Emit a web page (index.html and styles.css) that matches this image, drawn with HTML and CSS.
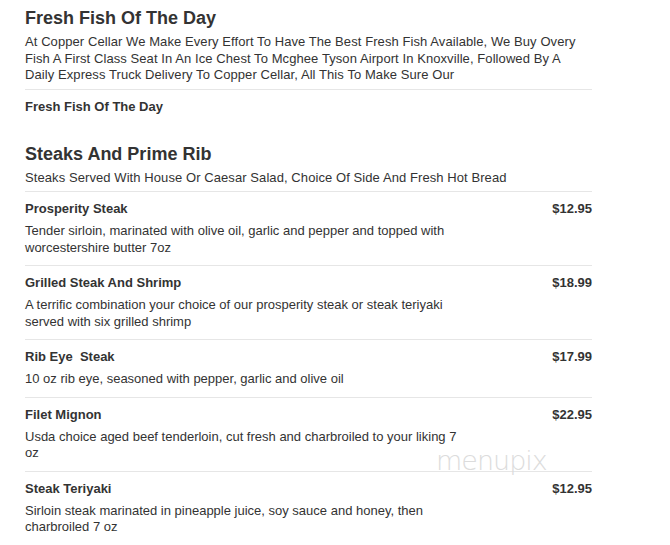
FILE: index.html
```html
<!DOCTYPE html>
<html>
<head>
<meta charset="utf-8">
<link rel="stylesheet" href="styles.css">
</head>
<body>
<div class="menu">
  <section class="section">
    <h2 class="section-title">Fresh Fish Of The Day</h2>
    <p class="section-desc">At Copper Cellar We Make Every Effort To Have The Best Fresh Fish Available, We Buy Overy Fish A First Class Seat In An Ice Chest To Mcghee Tyson Airport In Knoxville, Followed By A Daily Express Truck Delivery To Copper Cellar, All This To Make Sure Our</p>
    <div class="item last">
      <div class="item-main">
        <div class="item-name">Fresh Fish Of The Day</div>
      </div>
    </div>
  </section>
  <section class="section">
    <h2 class="section-title">Steaks And Prime Rib</h2>
    <p class="section-desc">Steaks Served With House Or Caesar Salad, Choice Of Side And Fresh Hot Bread</p>
    <div class="item">
      <div class="item-main">
        <div class="item-name">Prosperity Steak</div>
        <div class="item-desc">Tender sirloin, marinated with olive oil, garlic and pepper and topped with worcestershire butter 7oz</div>
      </div>
      <div class="item-price">$12.95</div>
    </div>
    <div class="item">
      <div class="item-main">
        <div class="item-name">Grilled Steak And Shrimp</div>
        <div class="item-desc">A terrific combination your choice of our prosperity steak or steak teriyaki served with six grilled shrimp</div>
      </div>
      <div class="item-price">$18.99</div>
    </div>
    <div class="item">
      <div class="item-main">
        <div class="item-name">Rib Eye &nbsp;Steak</div>
        <div class="item-desc">10 oz rib eye, seasoned with pepper, garlic and olive oil</div>
      </div>
      <div class="item-price">$17.99</div>
    </div>
    <div class="item">
      <div class="item-main">
        <div class="item-name">Filet Mignon</div>
        <div class="item-desc">Usda choice aged beef tenderloin, cut fresh and charbroiled to your liking 7 oz</div>
      </div>
      <div class="item-price">$22.95</div>
    </div>
    <div class="item last">
      <div class="item-main">
        <div class="item-name">Steak Teriyaki</div>
        <div class="item-desc">Sirloin steak marinated in pineapple juice, soy sauce and honey, then charbroiled 7 oz</div>
      </div>
      <div class="item-price">$12.95</div>
    </div>
  </section>
  <div class="watermark">menupix</div>
</div>
</body>
</html>
```
FILE: styles.css
```css
* { box-sizing: border-box; }
html, body { margin: 0; padding: 0; background: #fff; }
body {
  font-family: "Liberation Sans", Arial, sans-serif;
  color: #333;
}
.menu {
  position: relative;
  width: 592px;
  padding: 7px 0 0 25px;
}
.section { margin-bottom: 13px; }
.section-title {
  margin: 0 0 5px;
  font-size: 18px;
  line-height: 22px;
  font-weight: bold;
  color: #333;
}
.section-desc {
  margin: 0;
  font-size: 13px;
  letter-spacing: 0.08px;
  line-height: 16.5px;
  padding-bottom: 5px;
  border-bottom: 1px solid #e6e6e6;
}
.item {
  display: flex;
  justify-content: space-between;
  align-items: flex-start;
  padding: 8px 0 9px;
  border-bottom: 1px solid #e6e6e6;
}
.item.last { border-bottom: none; }
.item-main { width: 440px; }
.item-name {
  font-size: 13px;
  font-weight: bold;
  line-height: 18px;
  margin-bottom: 5px;
}
.item-desc {
  font-size: 13px;
  line-height: 16.5px;
}
.item-price {
  font-size: 13px;
  font-weight: bold;
  line-height: 18px;
}
.watermark {
  position: absolute;
  left: 436px;
  top: 451px;
  font-family: "DejaVu Sans", sans-serif;
  font-weight: 200;
  font-size: 27px;
  line-height: 20px;
  letter-spacing: -1px;
  color: #dcdcdc;
}
```
